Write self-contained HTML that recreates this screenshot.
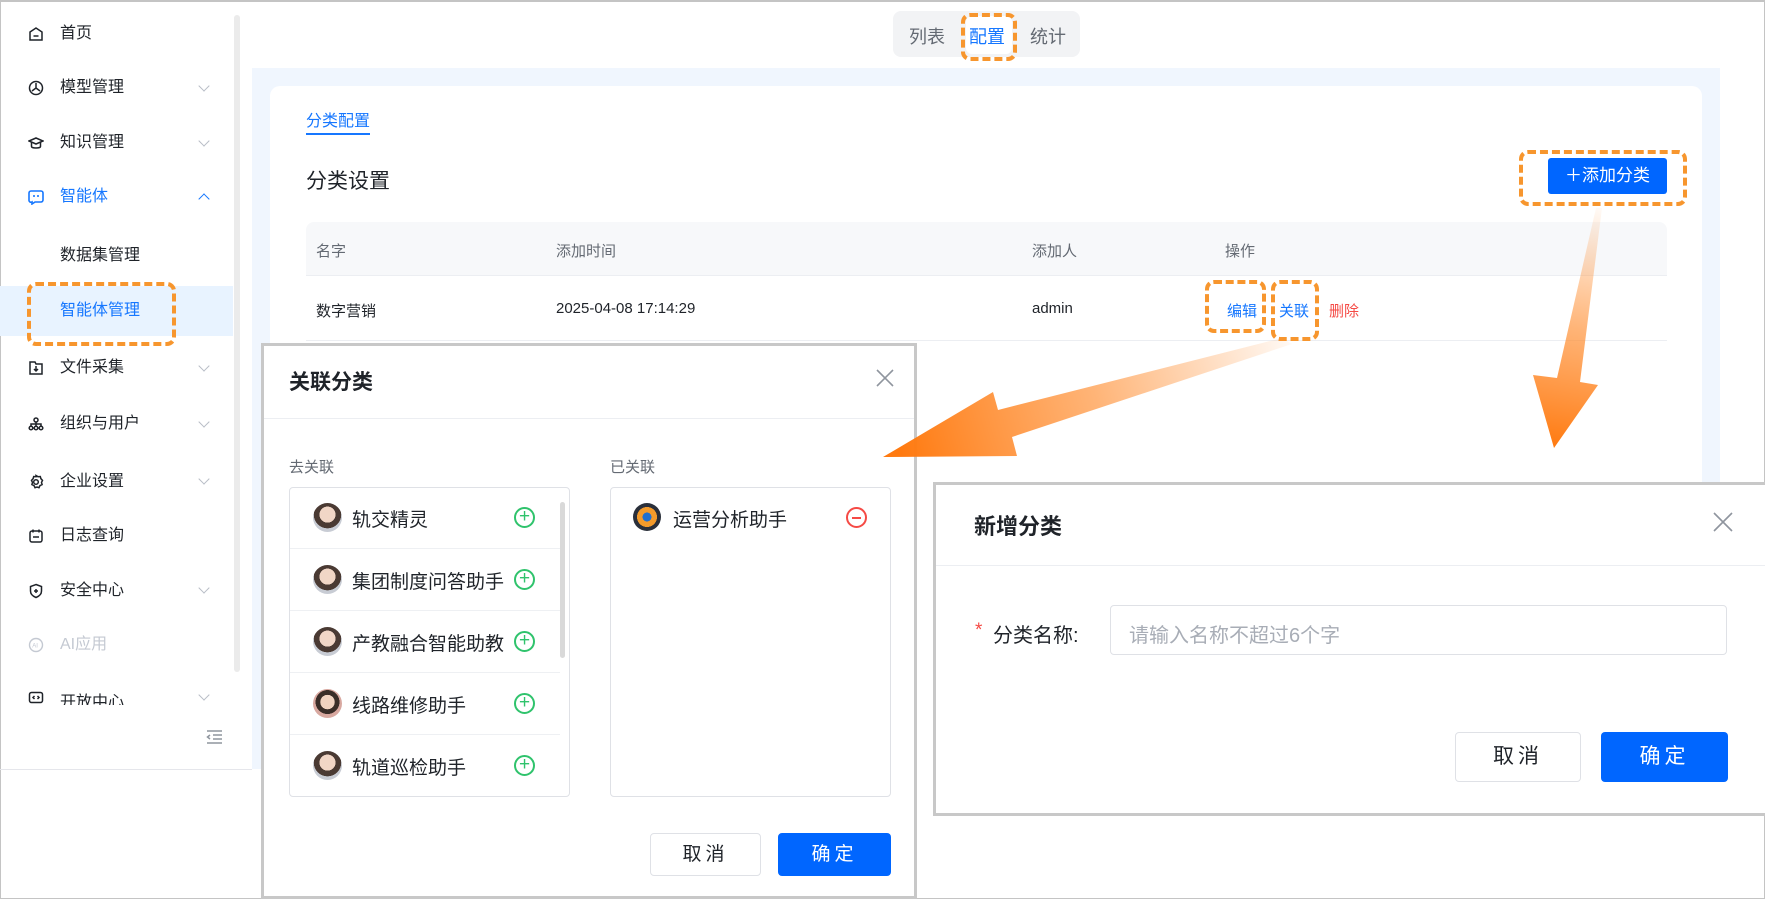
<!DOCTYPE html>
<html><head><meta charset="utf-8"><style>
*{box-sizing:border-box;margin:0;padding:0}
body{width:1765px;height:899px;position:relative;overflow:hidden;background:#fff;font-family:"Liberation Sans","Noto Sans CJK SC",sans-serif;color:#1f2329}
.a{position:absolute}
.si{position:absolute;left:60px;font-size:16px;color:#1f2329;line-height:20px}
.ic{position:absolute;left:28px;width:16px;height:16px}
.chev{position:absolute;left:200px;width:8px;height:8px;border-right:1.3px solid #b8bdc6;border-bottom:1.3px solid #b8bdc6;transform:rotate(45deg)}
.th{position:absolute;top:240px;font-size:15px;color:#646a73}
.td{position:absolute;top:300px;font-size:15px;color:#1f2329}
.dash{position:absolute;border:4px dashed #f7962e;border-radius:9px}
.row{position:absolute;left:290px;width:270px;height:62px;border-bottom:1px solid #eef0f3}
.av{position:absolute;left:23px;top:16px;width:29px;height:29px;border-radius:50%;background:radial-gradient(circle at 50% 40%,#f1d6c6 0 35%,#4a3a33 36% 60%,#c8ccd4 61%)}
.rt{position:absolute;left:62px;top:18px;font-size:19px;color:#1f2329}
.pl{position:absolute;left:224px;top:20px;width:21px;height:21px;border:2px solid #2fc36c;border-radius:50%;color:#2fc36c;font-size:19px;line-height:15px;text-align:center}
.btn{position:absolute;border-radius:4px;font-size:19px;text-align:center;letter-spacing:4px}
</style></head><body>
<div class="a" style="left:0;top:0;width:1765px;height:899px;border:1px solid #c4c4c4;border-top:2px solid #c4c4c4"></div>
<!-- sidebar -->
<div class="a" style="left:0;top:286px;width:233px;height:50px;background:#e8f3ff"></div>
<div class="a" style="left:234px;top:15px;width:6px;height:657px;background:#ebebeb;border-radius:3px"></div>
<div class="a" style="left:0;top:769px;width:252px;height:1px;background:#e5e6eb"></div>
<svg class="ic" style="top:26px" viewBox="0 0 16 16" fill="none" stroke="#1f2329" stroke-width="1.5"><path d="M2 6l6-4 6 4v8H2z"/><path d="M5.5 10h5"/></svg>
<div class="si" style="top:24px">首页</div>
<svg class="ic" style="top:80px" viewBox="0 0 16 16" fill="none" stroke="#1f2329" stroke-width="1.5"><circle cx="8" cy="8" r="6.5"/><path d="M8 3v5l-4 3M8 8l4 3"/></svg>
<div class="si" style="top:78px">模型管理</div><div class="chev" style="top:82px"></div>
<svg class="ic" style="top:135px" viewBox="0 0 16 16" fill="none" stroke="#1f2329" stroke-width="1.5"><path d="M1 6l7-3 7 3-7 3z"/><path d="M3.5 7.5v4c0 2 9 2 9 0v-4"/></svg>
<div class="si" style="top:133px">知识管理</div><div class="chev" style="top:137px"></div>
<svg class="ic" style="top:189px" viewBox="0 0 16 16" fill="none" stroke="#1677ff" stroke-width="1.6"><path d="M3 2h10a2 2 0 012 2v7a2 2 0 01-2 2H7l-3 2v-2a2 2 0 01-3-2V4a2 2 0 012-2z"/><path d="M6 6v2M10 6v2"/></svg>
<div class="si" style="top:187px;color:#1677ff">智能体</div><div class="chev" style="top:195px;transform:rotate(225deg);border-color:#1677ff"></div>
<div class="si" style="top:246px">数据集管理</div>
<div class="si" style="top:301px;color:#1677ff">智能体管理</div>
<div class="dash" style="left:27px;top:282px;width:149px;height:64px"></div>
<svg class="ic" style="top:360px" viewBox="0 0 16 16" fill="none" stroke="#1f2329" stroke-width="1.5"><path d="M2 2h5l1 2h6v10H2z"/><path d="M8 6v5M6 9l2 2 2-2"/></svg>
<div class="si" style="top:358px">文件采集</div><div class="chev" style="top:362px"></div>
<svg class="ic" style="top:416px" viewBox="0 0 16 16" fill="none" stroke="#1f2329" stroke-width="1.5"><circle cx="8" cy="4" r="2"/><circle cx="3" cy="12" r="1.8"/><circle cx="8" cy="12" r="1.8"/><circle cx="13" cy="12" r="1.8"/><path d="M8 6v4M3 10V8h10v2"/></svg>
<div class="si" style="top:414px">组织与用户</div><div class="chev" style="top:418px"></div>
<svg class="ic" style="top:474px" viewBox="0 0 16 16" fill="none" stroke="#1f2329" stroke-width="1.5"><circle cx="8" cy="8" r="2.3"/><path d="M8 1.5l2 1.2 2.3-.2.6 2.2 1.6 1.7-1 2 .6 2.2-2.1 1-1 2.1-2-.7-2 .7-1-2.1-2.1-1 .6-2.2-1-2 1.6-1.7.6-2.2 2.3.2z"/></svg>
<div class="si" style="top:472px">企业设置</div><div class="chev" style="top:475px"></div>
<svg class="ic" style="top:528px" viewBox="0 0 16 16" fill="none" stroke="#1f2329" stroke-width="1.5"><rect x="2" y="3" width="12" height="11" rx="2"/><path d="M5 1.5v3M11 1.5v3M5 9h6"/></svg>
<div class="si" style="top:526px">日志查询</div>
<svg class="ic" style="top:583px" viewBox="0 0 16 16" fill="none" stroke="#1f2329" stroke-width="1.5"><path d="M8 1.5l5.5 2v4.5c0 3.5-3 5.5-5.5 6.5-2.5-1-5.5-3-5.5-6.5V3.5z"/><path d="M8 6v4M6 8h4"/></svg>
<div class="si" style="top:581px">安全中心</div><div class="chev" style="top:584px"></div>
<svg class="ic" style="top:637px" viewBox="0 0 16 16" fill="none" stroke="#c4c9d2" stroke-width="1.4"><circle cx="8" cy="8" r="6.5"/><text x="4.3" y="10.5" font-size="6" fill="#c4c9d2" stroke="none" font-family="Liberation Sans">AI</text></svg>
<div class="si" style="top:635px;color:#c4c9d2">AI应用</div>
<svg class="ic" style="top:690px" viewBox="0 0 16 16" fill="none" stroke="#1f2329" stroke-width="1.5"><rect x="1.5" y="2.5" width="13" height="10" rx="2"/><path d="M6.5 6L5 7.5 6.5 9M9.5 6L11 7.5 9.5 9"/></svg>
<div class="a" style="left:60px;top:688px;height:17px;overflow:hidden;font-size:16px">开放中心</div><div class="chev" style="top:691px"></div>
<svg class="a" style="left:206px;top:730px" width="17" height="14" viewBox="0 0 17 14" fill="none" stroke="#8f959e" stroke-width="1.5"><path d="M1 1h15M7 5h9M7 9h9M1 13h15M4 5L1.5 7 4 9"/></svg>

<!-- top segmented -->
<div class="a" style="left:893px;top:11px;width:187px;height:46px;background:#f2f3f5;border-radius:8px"></div>
<div class="a" style="left:966px;top:16px;width:46px;height:38px;background:#fff;border-radius:6px"></div>
<div class="a" style="left:909px;top:23px;font-size:18px;color:#646a73">列表</div>
<div class="a" style="left:969px;top:23px;font-size:18px;color:#1677ff">配置</div>
<div class="a" style="left:1030px;top:23px;font-size:18px;color:#646a73">统计</div>
<div class="dash" style="left:961px;top:13px;width:56px;height:48px"></div>

<!-- content -->
<div class="a" style="left:252px;top:68px;width:1468px;height:701px;background:#f0f6fe"></div>
<div class="a" style="left:270px;top:86px;width:1432px;height:683px;background:#fff;border-radius:10px 10px 0 0"></div>
<div class="a" style="left:306px;top:107px;font-size:16px;color:#1677ff">分类配置</div>
<div class="a" style="left:306px;top:133px;width:64px;height:2px;background:#1677ff"></div>
<div class="a" style="left:306px;top:165px;font-size:21px;color:#1f2329">分类设置</div>
<div class="a" style="left:1548px;top:158px;width:119px;height:36px;background:#0066ff;border-radius:3px;color:#fff;font-size:17px;line-height:36px;text-align:center">＋添加分类</div>
<div class="dash" style="left:1519px;top:150px;width:168px;height:56px"></div>
<div class="a" style="left:306px;top:222px;width:1361px;height:54px;background:#f7f8fa;border-radius:8px 8px 0 0;border-bottom:1px solid #eceef2"></div>
<div class="th" style="left:316px">名字</div><div class="th" style="left:556px">添加时间</div><div class="th" style="left:1032px">添加人</div><div class="th" style="left:1225px">操作</div>
<div class="a" style="left:306px;top:340px;width:1361px;height:1px;background:#eceef2"></div>
<div class="td" style="left:316px">数字营销</div><div class="td" style="left:556px">2025-04-08 17:14:29</div><div class="td" style="left:1032px">admin</div>
<div class="td" style="left:1227px;color:#1677ff">编辑</div><div class="td" style="left:1279px;color:#1677ff">关联</div><div class="td" style="left:1329px;color:#f54a45">删除</div>
<div class="dash" style="left:1205px;top:280px;width:61px;height:53px"></div>
<div class="dash" style="left:1271px;top:280px;width:48px;height:61px"></div>

<!-- dialog 1 -->
<div class="a" style="left:261px;top:343px;width:656px;height:556px;background:#fff;border:3px solid #c8c8c8"></div>
<div class="a" style="left:289px;top:366px;font-size:21px;font-weight:bold;color:#1f2329">关联分类</div>
<svg class="a" style="left:876px;top:369px" width="18" height="18" stroke="#8f959e" stroke-width="1.6"><path d="M1 1l16 16M17 1L1 17"/></svg>
<div class="a" style="left:264px;top:418px;width:650px;height:1px;background:#eceef2"></div>
<div class="a" style="left:289px;top:456px;font-size:15px;color:#646a73">去关联</div>
<div class="a" style="left:610px;top:456px;font-size:15px;color:#646a73">已关联</div>
<div class="a" style="left:289px;top:487px;width:281px;height:310px;border:1px solid #dfe1e6;border-radius:4px;overflow:hidden"></div>
<div class="a" style="left:560px;top:502px;width:5px;height:156px;background:#d9d9d9;border-radius:3px"></div>
<div class="row" style="top:487px"><div class="av"></div><div class="rt">轨交精灵</div><div class="pl">+</div></div>
<div class="row" style="top:549px"><div class="av"></div><div class="rt">集团制度问答助手</div><div class="pl">+</div></div>
<div class="row" style="top:611px"><div class="av"></div><div class="rt">产教融合智能助教</div><div class="pl">+</div></div>
<div class="row" style="top:673px"><div class="av" style="background:radial-gradient(circle at 50% 45%,#f0d2c0 0 33%,#3a2d28 34% 55%,#d8a8a0 56%)"></div><div class="rt">线路维修助手</div><div class="pl">+</div></div>
<div class="row" style="top:735px;border:none"><div class="av"></div><div class="rt">轨道巡检助手</div><div class="pl">+</div></div>
<div class="a" style="left:610px;top:487px;width:281px;height:310px;border:1px solid #dfe1e6;border-radius:4px"></div>
<div class="a" style="left:633px;top:503px;width:28px;height:28px;border-radius:50%;background:radial-gradient(circle,#1f6fd0 0 22%,#f39a2b 23% 50%,#2a2f3a 51%)"></div>
<div class="a" style="left:673px;top:505px;font-size:19px">运营分析助手</div>
<div class="a" style="left:846px;top:507px;width:21px;height:21px;border:2px solid #f54a45;border-radius:50%"><div class="a" style="left:4px;top:8px;width:9px;height:1.8px;background:#f54a45"></div></div>
<div class="btn" style="left:650px;top:833px;width:111px;height:43px;border:1px solid #dfe1e6;line-height:41px;color:#1f2329">取消</div>
<div class="btn" style="left:778px;top:833px;width:113px;height:43px;background:#0066ff;line-height:43px;color:#fff">确定</div>

<!-- dialog 2 -->
<div class="a" style="left:933px;top:482px;width:834px;height:334px;background:#fff;border:3px solid #c8c8c8;border-right:none"></div>
<div class="a" style="left:974px;top:509px;font-size:22px;font-weight:bold;color:#1f2329">新增分类</div>
<svg class="a" style="left:1713px;top:512px" width="20" height="20" stroke="#8f959e" stroke-width="1.6"><path d="M1 1l18 18M19 1L1 19"/></svg>
<div class="a" style="left:936px;top:565px;width:829px;height:1px;background:#eceef2"></div>
<div class="a" style="left:975px;top:620px;font-size:19px;color:#f54a45">*</div>
<div class="a" style="left:993px;top:619px;font-size:20px;color:#1f2329">分类名称:</div>
<div class="a" style="left:1110px;top:605px;width:617px;height:50px;border:1px solid #dfe1e6;border-radius:4px"></div>
<div class="a" style="left:1129px;top:619px;font-size:20px;color:#a8adb6">请输入名称不超过6个字</div>
<div class="btn" style="left:1455px;top:732px;width:126px;height:50px;border:1px solid #dfe1e6;line-height:48px;font-size:21px;color:#1f2329">取消</div>
<div class="btn" style="left:1601px;top:732px;width:127px;height:50px;background:#0066ff;line-height:50px;font-size:21px;color:#fff">确定</div>

<!-- arrows -->
<svg class="a" style="left:0;top:0" width="1765" height="899">
<defs>
<linearGradient id="g1" x1="1290" y1="340" x2="900" y2="450" gradientUnits="userSpaceOnUse"><stop offset="0" stop-color="#ff8c2e" stop-opacity="0.05"/><stop offset="0.5" stop-color="#ff8c2e" stop-opacity="0.65"/><stop offset="1" stop-color="#ff7a10"/></linearGradient>
<linearGradient id="g2" x1="1600" y1="210" x2="1555" y2="448" gradientUnits="userSpaceOnUse"><stop offset="0" stop-color="#ff8c2e" stop-opacity="0.05"/><stop offset="0.5" stop-color="#ff8c2e" stop-opacity="0.65"/><stop offset="1" stop-color="#ff7a10"/></linearGradient>
</defs>
<polygon fill="url(#g1)" points="1282,338 1292,344 1012,437 1017,456 883,457 993,392 998,410"/>
<polygon fill="url(#g2)" points="1596,208 1602,208 1580,382 1598,385 1554,448 1533,375 1557,378"/>
</svg>
</body></html>
